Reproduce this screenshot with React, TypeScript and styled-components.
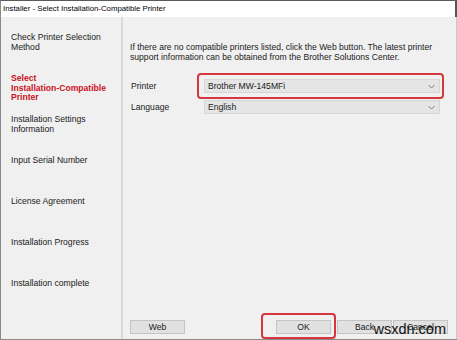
import React from "react";
import styled, { createGlobalStyle } from "styled-components";

const GlobalStyle = createGlobalStyle`
  html, body {
    margin: 0;
    padding: 0;
    background: #ffffff;
  }
  body {
    font-family: Tahoma, "Liberation Sans", Arial, sans-serif;
  }
`;

const steps = [
  { label: "Check Printer Selection Method", active: false },
  { label: "Select Installation-Compatible Printer", active: true },
  { label: "Installation Settings Information", active: false },
  { label: "Input Serial Number", active: false },
  { label: "License Agreement", active: false },
  { label: "Installation Progress", active: false },
  { label: "Installation complete", active: false },
];

// Little chevron used in the combo boxes
const Chevron = () => (
  <svg width="7" height="5" viewBox="0 0 7 5">
    <polyline
      points="0.5,1 3.5,4 6.5,1"
      fill="none"
      stroke="#7a7a7a"
      strokeWidth="1"
    />
  </svg>
);

function App() {
  return (
    <>
      <GlobalStyle />
      <Window>
        <TitleBar>Installer - Select Installation-Compatible Printer</TitleBar>
        <Body>
          <Sidebar>
            {steps.map((step) => (
              <Step key={step.label} $active={step.active}>
                {/* words never break at their hyphen, like the installer */}
                {step.label.split(" ").map((word, i) => (
                  <React.Fragment key={i}>
                    {i > 0 ? " " : null}
                    <Word>{word}</Word>
                  </React.Fragment>
                ))}
              </Step>
            ))}
          </Sidebar>

          <Main>
            <Description>
              If there are no compatible printers listed, click the Web button.
              The latest printer support information can be obtained from the
              Brother Solutions Center.
            </Description>

            <Form>
              <Label>Printer</Label>
              <Combo $highlight>
                <span>Brother MW-145MFi</span>
                <Chevron />
              </Combo>

              <Label>Language</Label>
              <Combo>
                <span>English</span>
                <Chevron />
              </Combo>
            </Form>

            <ButtonBar>
              <Button>Web</Button>
              <Spacer />
              <Button $highlight>OK</Button>
              <Button $gap={6}>Back</Button>
              <Button $gap={1}>Cancel</Button>
            </ButtonBar>
          </Main>
        </Body>
        <Watermark>wsxdn.com</Watermark>
      </Window>
    </>
  );
}

export default App;

const Window = styled.div`
  position: relative;
  box-sizing: border-box;
  width: 457px;
  height: 340px;
  display: flex;
  flex-direction: column;
  border-left: 1px solid #8a8a8a;
  border-bottom: 1px solid #8a8a8a;
  border-top: 1px solid #5a5a5a;
  overflow: hidden;
`;

const TitleBar = styled.div`
  height: 16px;
  line-height: 15px;
  padding-left: 2px;
  background: #ffffff;
  color: #000000;
  font-size: 7.8px;
  border-right: 2px solid #555555;
  white-space: nowrap;
`;

const Body = styled.div`
  flex: 1;
  display: flex;
  background: #f0f0f0;
  border-right: 1px solid #c8c8c8;
`;

const Sidebar = styled.div`
  width: 120px;
  padding-top: 16px;
  border-right: 2px solid #d9d9d9;
  display: flex;
  flex-direction: column;
`;

const Step = styled.div<{ $active?: boolean }>`
  height: 41px;
  padding-left: 10px;
  padding-right: 6px;
  font-size: 8.6px;
  line-height: 9.5px;
  color: ${(p) => (p.$active ? "#c8101e" : "#1a1a1a")};
  font-weight: ${(p) => (p.$active ? "bold" : "normal")};
`;

const Word = styled.span`
  white-space: nowrap;
`;

const Main = styled.div`
  flex: 1;
  display: flex;
  flex-direction: column;
  padding: 26px 8px 5px 7px;
`;

const Description = styled.p`
  margin: 0;
  font-size: 8.6px;
  line-height: 9.5px;
  color: #1a1a1a;
  padding-right: 6px;
`;

const Form = styled.div`
  display: grid;
  grid-template-columns: 74px 1fr;
  row-gap: 7px;
  align-items: center;
  margin-top: 17px;
  padding-right: 8px;
`;

const Label = styled.div`
  font-size: 8.6px;
  color: #1a1a1a;
  padding-left: 1px;
`;

const Combo = styled.div<{ $highlight?: boolean }>`
  position: relative;
  height: 14px;
  box-sizing: border-box;
  display: flex;
  align-items: center;
  justify-content: space-between;
  padding: 0 4px 0 3px;
  background: #e5e5e5;
  border: 1px solid #d6d6d6;
  font-size: 8.6px;
  color: #1a1a1a;

  ${(p) =>
    p.$highlight &&
    `
    &::after {
      content: "";
      position: absolute;
      inset: -7px -5px -7px -8px;
      border: 2px solid #d8363e;
      border-radius: 4px;
    }
  `}
`;

const ButtonBar = styled.div`
  margin-top: auto;
  display: flex;
  align-items: center;
`;

const Spacer = styled.div`
  flex: 1;
`;

const Button = styled.div<{ $highlight?: boolean; $gap?: number }>`
  position: relative;
  width: 55px;
  height: 14px;
  box-sizing: border-box;
  margin-left: ${(p) => (p.$gap ?? 0) + "px"};
  display: flex;
  align-items: center;
  justify-content: center;
  background: #e1e1e1;
  border: 1px solid #c4c4c4;
  font-size: 8.6px;
  color: #1a1a1a;

  ${(p) =>
    p.$highlight &&
    `
    &::after {
      content: "";
      position: absolute;
      inset: -8px -6px -6px -16px;
      border: 2px solid #d8363e;
      border-radius: 4px;
    }
  `}
`;

const Watermark = styled.div`
  position: absolute;
  right: 11px;
  bottom: 2px;
  font-family: "Liberation Sans", Arial, sans-serif;
  font-size: 14.5px;
  letter-spacing: 0;
  color: #111111;
  pointer-events: none;
`;
